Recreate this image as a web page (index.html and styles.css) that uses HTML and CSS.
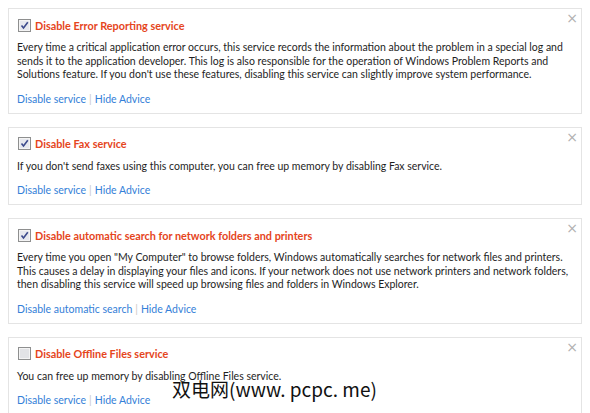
FILE: index.html
```html
<!DOCTYPE html>
<html>
<head>
<meta charset="utf-8">
<link rel="stylesheet" href="styles.css">
</head>
<body>
<div class="list">
  <div class="card">
    <span class="close">×</span>
    <div class="title-row">
      <span class="cb checked"><svg viewBox="0 0 13 13" width="13" height="13"><rect x="0.5" y="0.5" width="12" height="12" fill="#f4f4f4" stroke="#8e8f8f"/><rect x="2" y="2" width="9" height="9" fill="#e6e8ee"/><path d="M3.5 6.5 L5.5 9 L9.8 3.2" fill="none" stroke="#3b4a8c" stroke-width="1.6"/></svg></span>
      <span class="title">Disable Error Reporting service</span>
    </div>
    <p class="desc">Every time a critical application error occurs, this service records the information about the problem in a special log and<br>sends it to the application developer. This log is also responsible for the operation of Windows Problem Reports and<br>Solutions feature. If you don't use these features, disabling this service can slightly improve system performance.</p>
    <div class="links"><a>Disable service</a><span class="sep">|</span><a>Hide Advice</a></div>
  </div>

  <div class="card">
    <span class="close">×</span>
    <div class="title-row">
      <span class="cb checked"><svg viewBox="0 0 13 13" width="13" height="13"><rect x="0.5" y="0.5" width="12" height="12" fill="#f4f4f4" stroke="#8e8f8f"/><rect x="2" y="2" width="9" height="9" fill="#e6e8ee"/><path d="M3.5 6.5 L5.5 9 L9.8 3.2" fill="none" stroke="#3b4a8c" stroke-width="1.6"/></svg></span>
      <span class="title">Disable Fax service</span>
    </div>
    <p class="desc">If you don't send faxes using this computer, you can free up memory by disabling Fax service.</p>
    <div class="links"><a>Disable service</a><span class="sep">|</span><a>Hide Advice</a></div>
  </div>

  <div class="card">
    <span class="close">×</span>
    <div class="title-row">
      <span class="cb checked"><svg viewBox="0 0 13 13" width="13" height="13"><rect x="0.5" y="0.5" width="12" height="12" fill="#f4f4f4" stroke="#8e8f8f"/><rect x="2" y="2" width="9" height="9" fill="#e6e8ee"/><path d="M3.5 6.5 L5.5 9 L9.8 3.2" fill="none" stroke="#3b4a8c" stroke-width="1.6"/></svg></span>
      <span class="title">Disable automatic search for network folders and printers</span>
    </div>
    <p class="desc">Every time you open "My Computer" to browse folders, Windows automatically searches for network files and printers.<br>This causes a delay in displaying your files and icons. If your network does not use network printers and network folders,<br>then disabling this service will speed up browsing files and folders in Windows Explorer.</p>
    <div class="links"><a>Disable automatic search</a><span class="sep">|</span><a>Hide Advice</a></div>
  </div>

  <div class="card">
    <span class="close">×</span>
    <div class="title-row">
      <span class="cb"><svg viewBox="0 0 13 13" width="13" height="13"><rect x="0.5" y="0.5" width="12" height="12" fill="#f4f4f4" stroke="#8e8f8f"/><rect x="2" y="2" width="9" height="9" fill="#e2e3e6"/></svg></span>
      <span class="title">Disable Offline Files service</span>
    </div>
    <p class="desc">You can free up memory by disabling Offline Files service.</p>
    <div class="links"><a>Disable service</a><span class="sep">|</span><a>Hide Advice</a></div>
  </div>
</div>
<div class="watermark">双电网(www. pcpc. me)</div>
</body>
</html>
```

FILE: styles.css
```css
html, body {
  margin: 0;
  background: #ffffff;
}
body {
  padding: 8px;
  font-family: "Lato", "Noto Sans", sans-serif;
  font-size: 10.5px;
  color: #1e1e1e;
  overflow: hidden;
  height: 413px;
  box-sizing: border-box;
  position: relative;
}
.list {
  display: flex;
  flex-direction: column;
  gap: 13px;
  width: 574px;
}
.card {
  position: relative;
  border: 1px solid #e4e4e4;
  padding: 7px 8px 6px 8px;
  background: #fff;
}
.close {
  position: absolute;
  top: 2px;
  right: 3px;
  color: #b0b0b0;
  font-size: 14px;
  line-height: 14px;
  font-family: "DejaVu Sans", sans-serif;
}
.title-row {
  display: flex;
  align-items: center;
  height: 18px;
  gap: 4px;
  padding-left: 1px;
}
.cb {
  display: flex;
  width: 13px;
  height: 13px;
}
.title {
  color: #e5451c;
  font-weight: bold;
  font-size: 10.85px;
}
.desc {
  margin: 7px 0 0 0;
  line-height: 13.5px;
  white-space: nowrap;
}
.links {
  margin-top: 9px;
  height: 16px;
  line-height: 16px;
  display: flex;
  align-items: center;
  white-space: nowrap;
}
.links a {
  color: #3480d8;
}
.sep {
  color: #c8c8c8;
  margin: 0 3px;
}
.watermark {
  position: absolute;
  left: 172px;
  top: 375px;
  font-family: "Noto Sans CJK SC", sans-serif;
  font-size: 19px;
  color: #111;
  white-space: nowrap;
}
```
